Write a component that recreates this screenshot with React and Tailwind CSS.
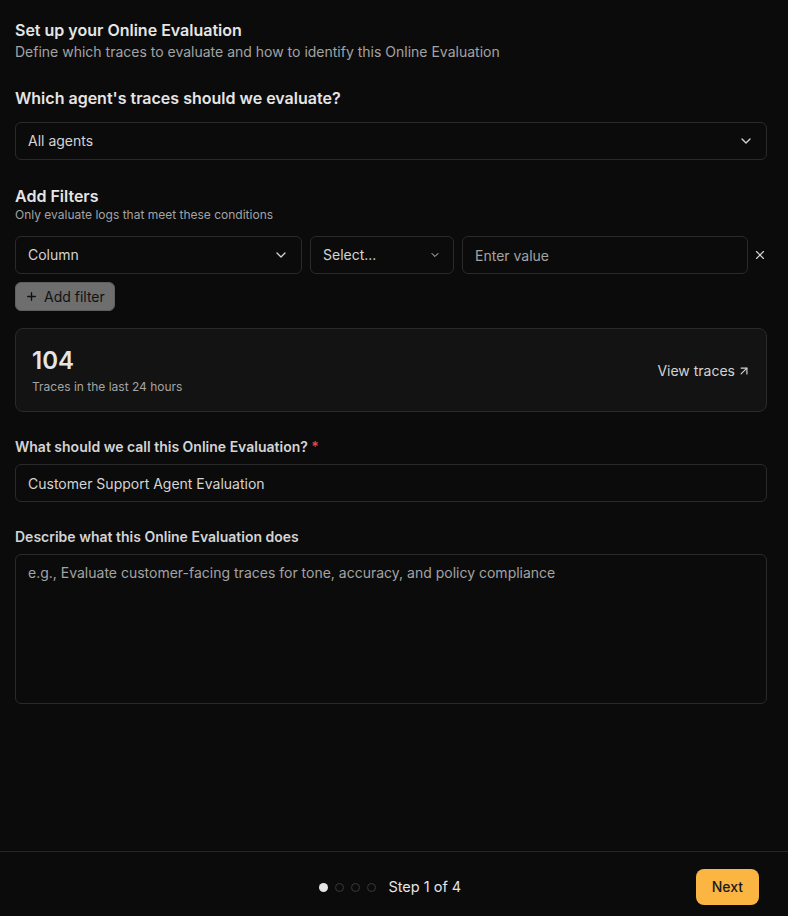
import { ChevronDown, Plus, X, ArrowUpRight } from 'lucide-react';

function Field({ children, className = '' }) {
  return (
    <div
      className={`flex h-[38px] items-center justify-between rounded-md border border-[#2a2a2a] bg-[#0b0b0b] px-3 text-sm text-[#d4d4d4] ${className}`}
    >
      {children}
    </div>
  );
}

export default function App() {
  return (
    <div
      className="flex h-screen flex-col bg-[#0b0b0b] text-[#e5e5e5]"
      style={{ fontFamily: 'Inter, "Noto Sans", sans-serif' }}
    >
      <main className="flex-1 pl-[15px] pr-[21px] pt-[20px]">
        {/* Header */}
        <div>
          <h1 className="text-base font-semibold leading-5 text-[#e5e5e5]">
            Set up your Online Evaluation
          </h1>
          <p className="mt-[2px] text-sm text-[#a3a3a3]">
            Define which traces to evaluate and how to identify this Online Evaluation
          </p>
        </div>

        {/* Agent */}
        <h2 className="mt-[26px] text-base font-semibold leading-5 text-[#e5e5e5]">
          Which agent's traces should we evaluate?
        </h2>
        <Field className="mt-[14px]">
          <span>All agents</span>
          <ChevronDown size={16} className="text-[#d4d4d4]" />
        </Field>

        {/* Filters */}
        <div className="mt-[26px]">
          <h3 className="text-base font-semibold leading-5 text-[#e5e5e5]">Add Filters</h3>
          <p className="mt-[1px] text-xs text-[#a3a3a3]">Only evaluate logs that meet these conditions</p>
        </div>
        <div className="mt-[13px] flex items-center gap-2">
          <Field className="w-[287px]">
            <span>Column</span>
            <ChevronDown size={16} />
          </Field>
          <Field className="w-[144px]">
            <span>Select...</span>
            <ChevronDown size={12} />
          </Field>
          <Field className="flex-1">
            <span className="pt-[1px] text-[#a3a3a3]">Enter value</span>
          </Field>
          <X size={14} className="ml-[-3px] text-[#d4d4d4]" />
        </div>
        <button className="mt-[8px] flex h-[29px] items-center gap-[6px] rounded-md border border-[#5f5f5f] bg-[#6e6e6e] px-[9px] text-sm text-[#111111]">
          <Plus size={13} strokeWidth={2.5} />
          Add filter
        </button>

        {/* Count card */}
        <div className="mt-[17px] flex h-[84px] items-center justify-between rounded-lg border border-[#2a2a2a] bg-[#131313] pl-4 pr-[15px] pt-[2px]">
          <div>
            <div className="text-2xl font-semibold leading-7 text-[#e5e5e5]">104</div>
            <div className="mt-[4px] text-xs text-[#a3a3a3]">Traces in the last 24 hours</div>
          </div>
          <div className="flex items-center gap-[2px] text-sm text-[#d4d4d4]">
            View traces
            <ArrowUpRight size={14} />
          </div>
        </div>

        {/* Name */}
        <label className="mt-[25px] block text-sm font-semibold text-[#d4d4d4]">
          What should we call this Online Evaluation? <span className="text-[#ef4444]">*</span>
        </label>
        <Field className="mt-[7px]">
          <span className="pt-[1px]">Customer Support Agent Evaluation</span>
        </Field>

        {/* Description */}
        <label className="mt-[25px] block text-sm font-semibold text-[#d4d4d4]">
          Describe what this Online Evaluation does
        </label>
        <div className="mt-[7px] h-[150px] rounded-md border border-[#2a2a2a] px-3 py-[8px] text-sm text-[#a3a3a3]">
          e.g., Evaluate customer-facing traces for tone, accuracy, and policy compliance
        </div>
      </main>

      {/* Footer */}
      <footer className="flex h-[65px] items-center justify-between border-t border-[#262626] pl-[29px] pr-[29px] pt-[6px]">
        <div className="w-[56px]" />
        <div className="flex items-center gap-[12px]">
          <div className="flex items-center gap-[7px]">
            <span className="h-[9px] w-[9px] rounded-full bg-[#e5e5e5]" />
            <span className="h-[9px] w-[9px] rounded-full border border-[#3a3a3a]" />
            <span className="h-[9px] w-[9px] rounded-full border border-[#3a3a3a]" />
            <span className="h-[9px] w-[9px] rounded-full border border-[#3a3a3a]" />
          </div>
          <span className="text-[14.5px] text-[#e5e5e5]">Step 1 of 4</span>
        </div>
        <button className="h-[36px] rounded-lg bg-[#fbb543] px-4 text-sm font-medium text-[#1a1a1a]">
          Next
        </button>
      </footer>
    </div>
  );
}
